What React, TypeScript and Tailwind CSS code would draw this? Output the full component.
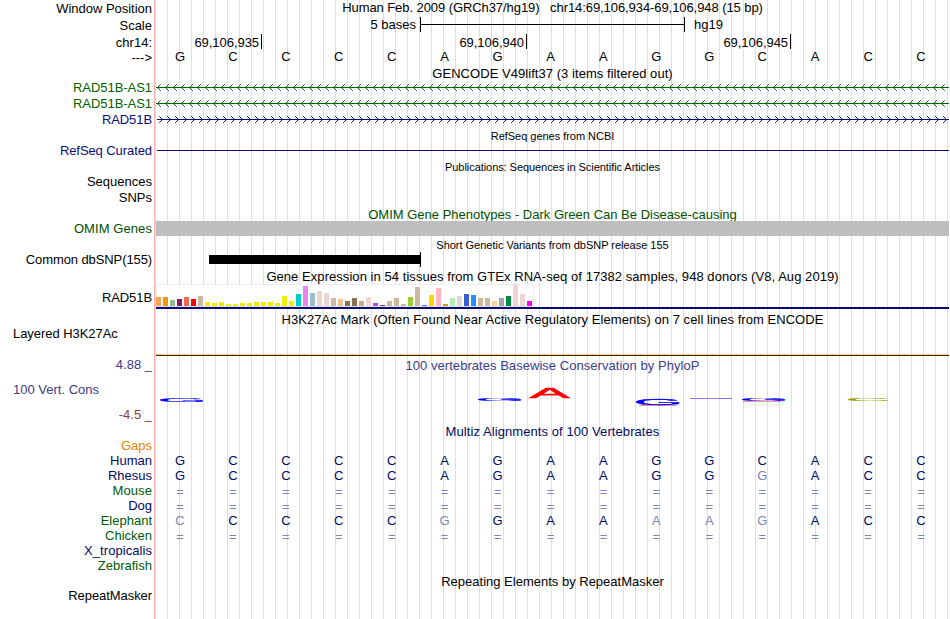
import React from "react";

const labels: [string, string][] = [
  ["Window Position", "mt-px tracking-[-0.02px]"],
  ["Scale", "mt-0.5"],
  ["chr14:", "mt-0.5"],
  ["--->", ""],
  ["RAD51B-AS1", "mt-[15px] tracking-[-0.05px] text-[#006400]"],
  ["RAD51B-AS1", "mt-px tracking-[-0.05px] text-[#006400]"],
  ["RAD51B", "mt-px tracking-[-0.08px] text-[#0c0c78]"],
  ["RefSeq Curated", "mt-4 tracking-[-0.08px] text-[#0c0c78]"],
  ["Sequences", "mt-4"],
  ["SNPs", "mt-px"],
  ["OMIM Genes", "mt-4 tracking-[0.08px] text-[#005000]"],
  ["Common dbSNP(155)", "mt-4 tracking-[-0.1px]"],
  ["RAD51B", "mt-[23px] tracking-[-0.08px]"],
  ["Layered H3K27Ac", "mt-[21px] pl-[13px] text-left! tracking-[-0.05px]"],
  ["4.88 _", "mt-4 text-[#3c3c8c]"],
  ["100 Vert. Cons", "mt-2.5 pl-[13px] text-left! text-[#3c3c8c]"],
  ["-4.5 _", "mt-2.5 text-[#8c3c3c]"],
  ["Gaps", "mt-4 text-[#e68200]"],
  ["Human", "text-[#000a64]"],
  ["Rhesus", "text-[#000a64]"],
  ["Mouse", "tracking-[0.1px] text-[#005a0a]"],
  ["Dog", "text-[#000a64]"],
  ["Elephant", "text-[#005a0a]"],
  ["Chicken", "text-[#005a0a]"],
  ["X_tropicalis", "tracking-[0.06px] text-[#000a64]"],
  ["Zebrafish", "text-[#005a0a]"],
  ["RepeatMasker", "mt-[15px] tracking-[-0.07px]"],
];

const tissues: [string, number][] = [
  ["#ffa54f", 9], ["#ee9a00", 9], ["#8fbc8f", 6], ["#8b1c62", 7], ["#ee6a50", 9], ["#ff0000", 7],
  ["#cdb79e", 10], ["#eeee00", 4], ["#eeee00", 3], ["#eeee00", 4], ["#eeee00", 2], ["#eeee00", 2],
  ["#eeee00", 3], ["#eeee00", 3], ["#eeee00", 4], ["#eeee00", 4], ["#eeee00", 4], ["#eeee00", 3],
  ["#eeee00", 10], ["#eeee00", 5], ["#00cdcd", 12], ["#ee82ee", 20], ["#9ac0cd", 13], ["#eed5d2", 15],
  ["#eed5d2", 13], ["#cdb79e", 8], ["#eec591", 7], ["#8b7355", 5], ["#8b7355", 8], ["#cdaa7d", 5],
  ["#eed5d2", 9], ["#b452cd", 3], ["#7a378b", 1], ["#cdb79e", 5], ["#cdb79e", 8], ["#cdb79e", 2],
  ["#9acd32", 9], ["#cdb79e", 19], ["#7a67ee", 1], ["#ffd700", 11], ["#ffb6c1", 18], ["#cd9b1d", 2],
  ["#b4eeb4", 8], ["#d9d9d9", 10], ["#3a5fcd", 12], ["#1e90ff", 11], ["#cdb79e", 8], ["#cdb79e", 8],
  ["#ffd39b", 5], ["#a6a6a6", 8], ["#008b45", 10], ["#eed5d2", 22], ["#eed5d2", 12], ["#ff00ff", 5],
];

function Title({ children, className = "" }: { children: React.ReactNode; className?: string }) {
  return <div className={`h-[15px] text-center whitespace-pre ${className}`}>{children}</div>;
}

function SmallTitle({ children, className = "" }: { children: React.ReactNode; className?: string }) {
  return <div className={`h-[13px] text-center text-[11px] leading-[13px] whitespace-pre ${className}`}>{children}</div>;
}

/* One base per column; lower-case letters are mismatches and are drawn faded. */
function Bases({ seq, className = "" }: { seq: string; className?: string }) {
  return (
    <div className={`-ml-[2.5px] grid h-[15px] w-[794px] grid-cols-15 text-center ${className}`}>
      {seq.split("").map((b, i) => (
        <span key={i} className={b === "=" || b !== b.toUpperCase() ? "text-[#8084b1]" : ""}>
          {b.toUpperCase()}
        </span>
      ))}
    </div>
  );
}

function Strand({ dir, className = "" }: { dir: "left" | "right"; className?: string }) {
  const marks = Array.from({ length: 99 }, (_, i) => i * 8);
  const start = dir === "left" ? 0 : 1;
  return (
    <svg className={`block h-[7px] w-[793px] ${className}`} viewBox="0 0 793 7" shapeRendering="crispEdges" fill="currentColor">
      <rect x={start} y="3" width={793 - start} height="1" />
      {marks.map((m) =>
        [1, 2, 3].map((k) => {
          const x = dir === "left" ? m + 1 + k : m + 6 - k;
          return (
            <g key={`${m}-${k}`} opacity={k === 3 ? 0.7 : 1}>
              <rect x={x} y={3 - k} width="1" height="1" />
              <rect x={x} y={3 + k} width="1" height="1" />
            </g>
          );
        }),
      )}
    </svg>
  );
}

const ink: Record<string, [number, number, number, number]> = {
  G: [4, 68, -70, 71],
  C: [4, 64, -70, 71],
  A: [0, 67, -69, 69],
};

/* Stretches a base letter so that it fills the box x, y, w, h. */
function LogoBase({ ch, x, y, w, h, fill }: { ch: string; x: number; y: number; w: number; h: number; fill: string }) {
  const [ix, iw, iy, ih] = ink[ch];
  const sx = w / iw;
  const sy = h / ih;
  return (
    <text fontSize="100" fill={fill} stroke={fill} strokeWidth="3" transform={`matrix(${sx} 0 0 ${sy} ${x - ix * sx} ${y - iy * sy})`}>
      {ch}
    </text>
  );
}

export default function App() {
  return (
    <div className="h-[619px] w-[950px] overflow-hidden bg-white font-['Liberation_Sans',Arial,sans-serif] text-[13px] leading-[15px] text-black">
      <div className="flex h-full w-[949px]">
        <div className="w-[154px] shrink-0 pr-0.5">
          {labels.map(([text, cls], i) => (
            <div key={i} className={`h-[15px] text-right whitespace-pre ${cls}`}>
              {text}
            </div>
          ))}
        </div>
        <div className="w-[795px] border-l border-[#ffb4b4]">
          <div className="h-full bg-[linear-gradient(90deg,#dcdcfa_1px,transparent_1px)] bg-size-[12px_100%] bg-position-[12px_0] pl-px">
            <Title className="tracking-[-0.075px]">Human Feb. 2009 (GRCh37/hg19)   chr14:69,106,934-69,106,948 (15 bp)</Title>

            <div className="mt-0.5 flex h-[15px]">
              <div className="w-[264px] pr-1 text-right">5 bases</div>
              <div className="flex w-[265px] items-center border-x border-black">
                <div className="h-px w-full bg-black" />
              </div>
              <div className="pl-[9px]">hg19</div>
            </div>
            <div className="mt-0.5 flex h-[15px] text-right leading-[17px] tracking-[-0.05px]">
              <div className="w-[106px] border-r border-black pr-0.5">69,106,935</div>
              <div className="w-[265px] border-r border-black pr-0.5">69,106,940</div>
              <div className="w-[264px] border-r border-black pr-0.5">69,106,945</div>
            </div>
            <Bases seq="GCCCCAGAAGGCACC" />

            <Title className="mt-0.5 tracking-[0.05px]">GENCODE V49lift37 (3 items filtered out)</Title>
            <Strand dir="left" className="mt-[3px] text-[#006400]" />
            <Strand dir="left" className="mt-[9px] text-[#006400]" />
            <Strand dir="right" className="mt-[9px] text-[#0c0c78]" />

            <SmallTitle className="mt-[7px] tracking-[-0.03px]">RefSeq genes from NCBI</SmallTitle>
            <div className="mt-[7px] ml-px h-px bg-[#0c0c78]" />
            <SmallTitle className="mt-2.5 tracking-[-0.06px]">Publications: Sequences in Scientific Articles</SmallTitle>

            <Title className="mt-[33px] h-[14px]! overflow-hidden text-[#005000]">
              OMIM Gene Phenotypes - Dark Green Can Be Disease-causing
            </Title>
            <div className="h-[15px] bg-[#bebebe]" />

            <SmallTitle className="mt-[3px] tracking-[-0.02px]">Short Genetic Variants from dbSNP release 155</SmallTitle>
            <div className="ml-[53px] flex h-[15px] w-[212px] items-center border-r border-black">
              <div className="h-[9px] w-full bg-black" />
            </div>

            <Title className="mt-0.5 tracking-[0.055px]">
              Gene Expression in 54 tissues from GTEx RNA-seq of 17382 samples, 948 donors (V8, Aug 2019)
            </Title>
            <div className="flex h-[23px] w-[378px] items-end gap-0.5 border-b border-[#e0e0e0] bg-white shadow-[inset_0_1px_#eeeeee,inset_-1px_0_#eeeeee,inset_1px_0_#eeeeee]">
              {tissues.map(([color, h], i) => (
                <div key={i} className="w-[5px] shrink-0" style={{ height: h, backgroundColor: color }} />
              ))}
            </div>
            <div className="h-0.5 bg-[#0c0c78]" />

            <Title className="mt-[3px] tracking-[0.05px]">
              H3K27Ac Mark (Often Found Near Active Regulatory Elements) on 7 cell lines from ENCODE
            </Title>
            <div className="mt-[27px] h-0.5 border-b border-[#332b2b] bg-[#ffd06a]" />

            <Title className="mt-0.5 tracking-[0.04px] text-[#3c3c8c]">100 vertebrates Basewise Conservation by PhyloP</Title>
            <svg className="block h-[51px] w-[793px]" viewBox="156 373 793 51">
              <LogoBase ch="G" x={160} y={398} w={43} h={4} fill="#0000ff" />
              <LogoBase ch="G" x={478} y={398} w={43} h={3} fill="#0000ff" />
              <LogoBase ch="A" x={529.5} y={388} w={40.5} h={10} fill="#ff0000" />
              <LogoBase ch="G" x={636} y={398} w={43} h={7} fill="#0000ff" />
              <rect x="639" y="405" width="38" height="1" fill="#ff0000" opacity=".4" />
              <rect x="690" y="398" width="42" height="1" fill="#0000ff" opacity=".5" />
              <LogoBase ch="G" x={742} y={398} w={43} h={3} fill="#0000ff" />
              <rect x="743" y="401" width="38" height="1" fill="#ff0000" opacity=".4" />
              <LogoBase ch="C" x={848} y={398} w={40} h={3} fill="#999900" />
            </svg>

            <Title className="tracking-[0.08px] text-[#000a64]">Multiz Alignments of 100 Vertebrates</Title>
            <div className="mt-3.5 text-[#000a64]">
              <Bases seq="GCCCCAGAAGGCACC" />
              <Bases seq="GCCCCAGAAGGgACC" />
              <Bases seq="===============" className="leading-[17px]" />
              <Bases seq="===============" className="leading-[17px]" />
              <Bases seq="cCCCCgGAAaagACC" />
              <Bases seq="===============" className="leading-[17px]" />
            </div>

            <Title className="mt-[31px]">Repeating Elements by RepeatMasker</Title>
          </div>
        </div>
      </div>
    </div>
  );
}
